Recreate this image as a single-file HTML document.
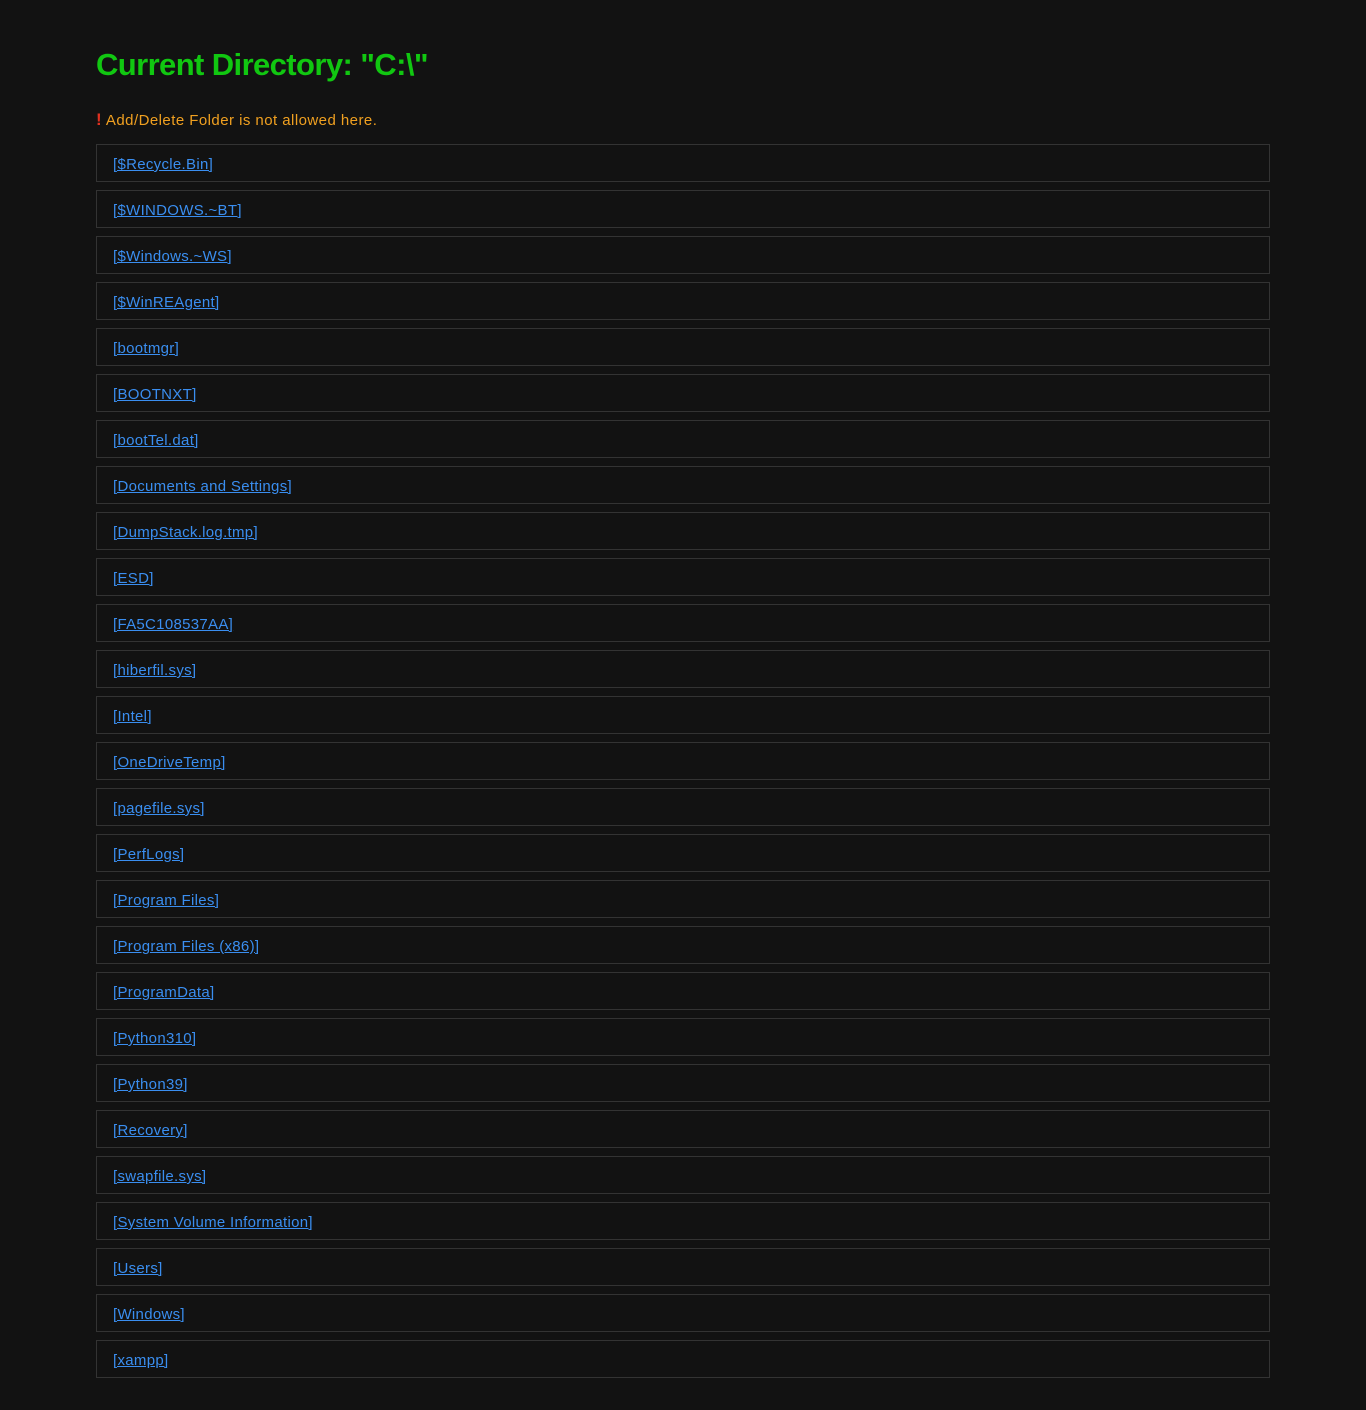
<!DOCTYPE html>
<html><head><meta charset="utf-8"><style>
html,body{margin:0;background:#121212;}
body{font-family:"Liberation Sans",sans-serif;padding:0 96px;width:1174px;height:1410px;overflow:hidden;}
h1{margin:0;position:absolute;top:47px;left:96px;color:#11c711;font-size:31px;font-weight:bold;letter-spacing:-0.6px;}
.warn{position:absolute;top:110px;left:96px;color:#f0a020;font-size:15px;letter-spacing:0.45px;}
.warn b{color:#e03020;font-weight:bold;font-size:17px;}
.list{position:absolute;top:144px;left:96px;width:1174px;}
.item{box-sizing:border-box;height:38px;border:1px solid #333;margin-bottom:8px;padding:11px 16px 0;font-size:15px;letter-spacing:0.3px;}
.item a{color:#3a8ef0;text-decoration:underline;}
</style></head><body>
<h1>Current Directory: "C:\"</h1>
<div class="warn"><b>!</b> Add/Delete Folder is not allowed here.</div>
<div class="list">
<div class="item"><a>[$Recycle.Bin]</a></div>
<div class="item"><a>[$WINDOWS.~BT]</a></div>
<div class="item"><a>[$Windows.~WS]</a></div>
<div class="item"><a>[$WinREAgent]</a></div>
<div class="item"><a>[bootmgr]</a></div>
<div class="item"><a>[BOOTNXT]</a></div>
<div class="item"><a>[bootTel.dat]</a></div>
<div class="item"><a>[Documents and Settings]</a></div>
<div class="item"><a>[DumpStack.log.tmp]</a></div>
<div class="item"><a>[ESD]</a></div>
<div class="item"><a>[FA5C108537AA]</a></div>
<div class="item"><a>[hiberfil.sys]</a></div>
<div class="item"><a>[Intel]</a></div>
<div class="item"><a>[OneDriveTemp]</a></div>
<div class="item"><a>[pagefile.sys]</a></div>
<div class="item"><a>[PerfLogs]</a></div>
<div class="item"><a>[Program Files]</a></div>
<div class="item"><a>[Program Files (x86)]</a></div>
<div class="item"><a>[ProgramData]</a></div>
<div class="item"><a>[Python310]</a></div>
<div class="item"><a>[Python39]</a></div>
<div class="item"><a>[Recovery]</a></div>
<div class="item"><a>[swapfile.sys]</a></div>
<div class="item"><a>[System Volume Information]</a></div>
<div class="item"><a>[Users]</a></div>
<div class="item"><a>[Windows]</a></div>
<div class="item"><a>[xampp]</a></div>
</div>
</body></html>
